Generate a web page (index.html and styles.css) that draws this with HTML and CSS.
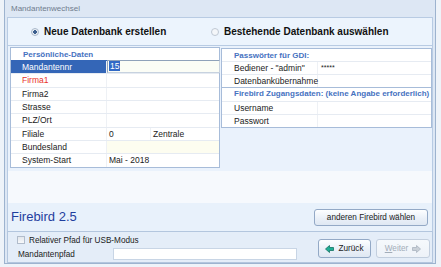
FILE: index.html
```html
<!DOCTYPE html>
<html>
<head>
<meta charset="utf-8">
<link rel="stylesheet" href="styles.css">
</head>
<body>
<div class="win">
  <div class="title">Mandantenwechsel</div>
  <div class="radios">
    <div class="opt opt1"><span class="radio on"></span>Neue Datenbank erstellen</div>
    <div class="opt"><span class="radio"></span>Bestehende Datenbank auswählen</div>
  </div>
  <div class="main">
    <div class="grids">
      <div class="grid left">
        <div class="hdr">Persönliche-Daten</div>
        <div class="row sel"><div class="lbl">Mandantennr</div><div class="val edit"><span class="selt">15</span></div></div>
        <div class="row"><div class="lbl red">Firma1</div><div class="val"></div></div>
        <div class="row"><div class="lbl">Firma2</div><div class="val"></div></div>
        <div class="row"><div class="lbl">Strasse</div><div class="val"></div></div>
        <div class="row"><div class="lbl">PLZ/Ort</div><div class="val"></div></div>
        <div class="row"><div class="lbl">Filiale</div><div class="val split"><span class="v1">0</span><span class="v2">Zentrale</span></div></div>
        <div class="row"><div class="lbl">Bundesland</div><div class="val yel"></div></div>
        <div class="row"><div class="lbl">System-Start</div><div class="val">Mai - 2018</div></div>
      </div>
      <div class="grid right">
        <div class="hdr">Passwörter für GDI:</div>
        <div class="row"><div class="lbl">Bediener - "admin"</div><div class="val stars">*****</div></div>
        <div class="row"><div class="lbl">Datenbankübernahme</div><div class="val"></div></div>
        <div class="hdr hdr2">Firebird Zugangsdaten: (keine Angabe erforderlich)</div>
        <div class="row"><div class="lbl">Username</div><div class="val"></div></div>
        <div class="row"><div class="lbl">Passwort</div><div class="val"></div></div>
      </div>
    </div>
    <div class="gap"></div>
    <div class="fb">
      <div class="fbname">Firebird 2.5</div>
      <button class="btn fbbtn">anderen Firebird wählen</button>
    </div>
  </div>
  <div class="bottom">
    <div class="bleft">
      <div class="chkrow"><span class="chk"></span>Relativer Pfad für USB-Modus</div>
      <div class="pathrow"><span class="plbl">Mandantenpfad</span><span class="pin"></span></div>
    </div>
    <div class="nav">
      <button class="btn navbtn back"><svg class="arr" width="9" height="8" viewBox="0 0 9 8"><polygon points="0.5,4 4.5,0.5 4.5,2.5 8.5,2.5 8.5,5.5 4.5,5.5 4.5,7.5" fill="#1fae95" stroke="#137262" stroke-width="0.8"/></svg><span>Zurück</span></button>
      <button class="btn navbtn next" disabled><span><u>W</u>eiter</span><svg class="arr" width="9" height="8" viewBox="0 0 9 8"><polygon points="8.5,4 4.5,0.5 4.5,2.5 0.5,2.5 0.5,5.5 4.5,5.5 4.5,7.5" fill="#c9d0d8" stroke="#aab4bf" stroke-width="0.8"/></svg></button>
    </div>
  </div>
</div>
</body>
</html>
```

FILE: styles.css
```css
html, body {
  margin: 0;
  padding: 0;
}
body {
  background: #eef3f9;
  font-family: "Liberation Sans", Arial, sans-serif;
  color: #1b1b1b;
  width: 441px;
  height: 267px;
  overflow: hidden;
}
.win {
  margin-left: 4px;
  width: 432px;
  height: 264px;
  box-sizing: border-box;
  border: 1px solid #9db3cf;
  border-top: none;
  background: #dde7f4;
  padding: 0 2px;
}
.title {
  height: 17px;
  box-sizing: border-box;
  padding: 2px 0 0 4px;
  line-height: 14px;
  font-size: 8px;
  color: #6f7c8e;
}
.radios {
  height: 29px;
  box-sizing: border-box;
  border: 1px solid #b8cbe3;
  background: #ecf4fd;
  display: flex;
  align-items: center;
  font-size: 10px;
  font-weight: bold;
  color: #111;
}
.opt {
  display: flex;
  align-items: center;
}
.opt1 {
  margin-left: 23px;
  width: 180px;
}
.radio {
  width: 6px;
  height: 6px;
  border: 1px solid #bfc8d4;
  border-radius: 50%;
  background: #f4f6f9;
  margin-right: 5px;
}
.radio.on {
  border-color: #a9b8ca;
  background: radial-gradient(circle, #3c5f8f 0, #3c5f8f 1.6px, #e9eef4 2px);
}
.main {
  height: 185px;
  box-sizing: border-box;
  border-left: 1px solid #b8cbe3;
  border-right: 1px solid #b8cbe3;
  background: #eaf2fc;
  display: flex;
  flex-direction: column;
}
.grids {
  height: 125px;
  display: flex;
  align-items: flex-start;
  padding: 1px 0 0 2px;
  box-sizing: border-box;
  gap: 1px;
}
.grid {
  background: #fff;
  border: 1px solid #a7bcd9;
  box-sizing: border-box;
  font-size: 8.5px;
}
.grid.left {
  width: 210px;
}
.grid.right {
  width: 211px;
  margin-top: 1px;
}
.hdr {
  height: 12px;
  line-height: 13px;
  font-size: 8px;
  font-weight: bold;
  color: #4672bf;
  padding-left: 12px;
  white-space: nowrap;
}
.hdr2 {
  height: 13.2px;
  box-sizing: border-box;
  border-top: 1px solid #a7bcd9;
  line-height: 12px;
}
.row {
  display: flex;
  height: 13.33px;
  box-sizing: border-box;
  border-top: 1px solid #e6ebf2;
  line-height: 12px;
}
.grid.right .row {
  height: 13.2px;
}
.lbl {
  width: 96px;
  flex: none;
  padding-left: 11px;
  box-sizing: border-box;
  white-space: nowrap;
  border-right: 1px solid #eef1f5;
}
.grid.right .lbl {
  padding-left: 12px;
}
.red {
  color: #e8332b;
}
.val {
  flex: 1;
  padding-left: 2px;
  white-space: nowrap;
}
.grid.right .val {
  padding-left: 3px;
}
.stars {
  font-size: 7px;
  line-height: 11px;
}
.yel {
  background: #fdfdf0;
}
.row.sel .lbl {
  background: #3466b7;
  color: #fff;
}
.row.sel {
  border-top-color: #3466b7;
}
.val.edit {
  border: 1px solid #8fa2ba;
  border-right-color: #c7d2df;
  border-bottom-color: #c7d2df;
  background: #fbfdf6;
  margin: -1px -1px 0 0;
  padding-left: 1px;
  line-height: 11px;
}
.selt {
  background: #3169c6;
  color: #fff;
  padding: 0 1px;
}
.split {
  display: flex;
}
.v1 {
  width: 41px;
  border-right: 1px solid #eef1f5;
}
.v2 {
  padding-left: 2px;
}
.gap {
  height: 32px;
  background: #f6f9fd;
}
.fb {
  flex: 1;
  display: flex;
  align-items: center;
  justify-content: space-between;
  padding: 0 4px 0 3px;
  background: #e8f1fb;
}
.fbname {
  font-size: 13px;
  color: #1f3e9e;
  margin-top: -2px;
}
.btn {
  font-family: "Liberation Sans", Arial, sans-serif;
  font-size: 8.2px;
  color: #1b1b1b;
  border: 1px solid #93a9c6;
  border-radius: 3px;
  background: linear-gradient(#fdfeff, #eaf0f8 55%, #dfe8f3);
  padding: 0;
  margin: 0;
  box-sizing: border-box;
}
.fbbtn {
  width: 114px;
  height: 17px;
  margin-top: 1px;
}
.bottom {
  height: 32px;
  box-sizing: border-box;
  border: 1px solid #b3c6de;
  background: #e4edf8;
  display: flex;
  font-size: 8.2px;
}
.bleft {
  flex: 1;
  padding-top: 1px;
}
.chkrow {
  height: 14px;
  display: flex;
  align-items: center;
  padding-left: 9px;
}
.chk {
  width: 6px;
  height: 6px;
  border: 1px solid #b1bccb;
  background: linear-gradient(#e3e7ec, #f7f8fa);
  margin-right: 4px;
}
.pathrow {
  height: 14px;
  display: flex;
  align-items: center;
  padding-left: 10px;
}
.plbl {
  width: 95px;
}
.pin {
  width: 184px;
  height: 12px;
  background: #fff;
  border: 1px solid #c8d5e5;
  box-sizing: border-box;
}
.nav {
  display: flex;
  gap: 5px;
  padding: 7px 2px 0 0;
}
.navbtn {
  height: 19px;
  display: flex;
  align-items: center;
  justify-content: center;
  gap: 4px;
}
.back {
  width: 53px;
}
.next {
  width: 54px;
  color: #a3adb9;
  border-color: #c3cfde;
  background: linear-gradient(#f6f9fc, #edf2f8);
}
.next u {
  text-decoration: underline;
}
.arr {
  display: block;
}
```
